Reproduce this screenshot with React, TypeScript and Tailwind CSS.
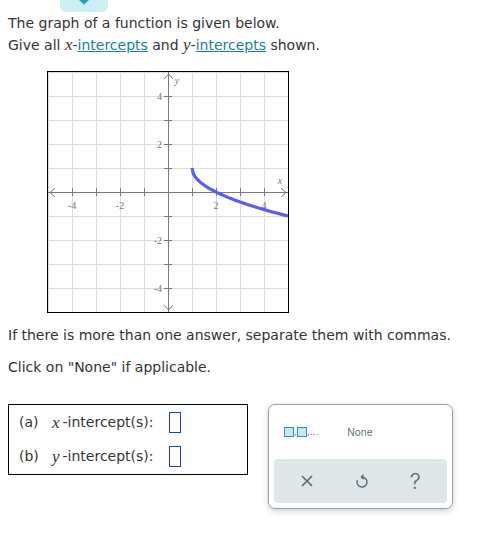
const U = 24;
const O = 120;

function curvePath() {
  const pts: string[] = [];
  for (let i = 0; i <= 80; i++) {
    const x = 1 + (4 * i) / 80;
    const y = 1 - Math.sqrt(x - 1);
    pts.push(`${(O + x * U).toFixed(2)},${(O - y * U).toFixed(2)}`);
  }
  return "M" + pts.join(" L");
}

function Graph() {
  const lines = [];
  for (let k = -5; k <= 5; k++) {
    const p = O + k * U;
    lines.push(<line key={"v" + k} x1={p} y1={0} x2={p} y2={240} stroke="#dcdcdc" strokeWidth={1} />);
    lines.push(<line key={"h" + k} x1={0} y1={p} x2={240} y2={p} stroke="#dcdcdc" strokeWidth={1} />);
  }
  const ticks = [];
  for (let k = -4; k <= 4; k++) {
    if (k === 0) continue;
    const p = O + k * U;
    ticks.push(<line key={"tx" + k} x1={p} y1={O - 4} x2={p} y2={O + 4} stroke="#7a7a7a" />);
    ticks.push(<line key={"ty" + k} x1={O - 4} y1={p} x2={O + 4} y2={p} stroke="#7a7a7a" />);
  }
  return (
    <svg width={240} height={240} className="block" shapeRendering="crispEdges">
      {lines}
      <line x1={0} y1={O + 0.5} x2={240} y2={O + 0.5} stroke="#7a7a7a" />
      <line x1={O + 0.5} y1={0} x2={O + 0.5} y2={240} stroke="#7a7a7a" />
      {ticks}
      <g fill="none" stroke="#7a7a7a" strokeWidth={1} shapeRendering="auto">
        <path d="M7,116 L2,120.5 L7,125" />
        <path d="M233,116 L238,120.5 L233,125" />
        <path d="M116,7 L120.5,2 L125,7" />
        <path d="M116,233 L120.5,238 L125,233" />
      </g>
      <g fill="#777" fontFamily="'Liberation Serif', serif" fontSize={10}>
        <text x={O - 4 * U} y={137} textAnchor="middle">-4</text>
        <text x={O - 2 * U} y={137} textAnchor="middle">-2</text>
        <text x={O + 2 * U} y={137} textAnchor="middle">2</text>
        <text x={O + 4 * U} y={137} textAnchor="middle">4</text>
        <text x={O - 6} y={O - 4 * U + 3.5} textAnchor="end">4</text>
        <text x={O - 6} y={O - 2 * U + 3.5} textAnchor="end">2</text>
        <text x={O - 6} y={O + 2 * U + 3.5} textAnchor="end">-2</text>
        <text x={O - 6} y={O + 4 * U + 3.5} textAnchor="end">-4</text>
        <text x={232} y={112} fontStyle="italic" textAnchor="middle">x</text>
        <text x={129} y={12} fontStyle="italic" textAnchor="middle">y</text>
      </g>
      <path d={curvePath()} fill="none" stroke="#5a5cf2" strokeWidth={3.2} shapeRendering="auto" />
    </svg>
  );
}

function Mx({ c }: { c: string }) {
  return <span className="font-['Liberation_Serif',serif] italic text-[17px]">{c}</span>;
}

export default function App() {
  return (
    <div className="w-[488px] h-[534px] bg-white text-[#333] font-['DejaVu_Sans',Verdana,sans-serif] text-[14px] leading-[21px]">
      <div className="ml-[60px] w-[48px] h-[12px] rounded-b-[7px] bg-[#cdeef5] flex justify-center">
        <svg width={12} height={5} viewBox="0 0 12 5">
          <path d="M1,0 L6,4.5 L11,0 Z" fill="#1fa3bf" />
        </svg>
      </div>
      <div className="pl-[8px] pt-[1px]">
        <p>The graph of a function is given below.</p>
        <p>
          Give all <Mx c="x" />-<span className="text-[#1b7f96] underline">intercepts</span> and <Mx c="y" />-
          <span className="text-[#1b7f96] underline">intercepts</span> shown.
        </p>
      </div>
      <div className="ml-[47px] mt-[15px] w-fit border border-black">
        <Graph />
      </div>
      <p className="pl-[8px] mt-[12px]">If there is more than one answer, separate them with commas.</p>
      <p className="pl-[8px] mt-[11px]">Click on "None" if applicable.</p>
      <div className="flex items-start mt-[26px] pl-[8px]">
        <div className="w-[240px] h-[71px] border border-black flex flex-col justify-center gap-[13px] pl-[10px]">
          <div className="flex items-center h-[21px]">
            <span className="w-[33px]">(a)</span>
            <Mx c="x" />
            <span className="ml-[3px]">-intercept(s):</span>
            <span className="ml-[15px] w-[12px] h-[21px] border border-[#1a3cf0]" />
          </div>
          <div className="flex items-center h-[21px]">
            <span className="w-[33px]">(b)</span>
            <Mx c="y" />
            <span className="ml-[3px]">-intercept(s):</span>
            <span className="ml-[15px] w-[12px] h-[21px] border border-[#1a3cf0]" />
          </div>
        </div>
        <div className="ml-[20px] w-[185px] h-[105px] rounded-[7px] border border-[#8ea3ab] shadow-[0_2px_6px_rgba(0,0,0,0.2)] p-[5px] flex flex-col">
          <div className="flex-1 flex items-center pl-[10px] pb-[5px]">
            <div className="flex items-end text-[#3a7d8e] text-[9px] leading-none">
              <span className="w-[10px] h-[10px] border-[1.5px] border-[#2a97ab] bg-[#c6e9f1]" />
              <span>,</span>
              <span className="w-[10px] h-[10px] border-[1.5px] border-[#2a97ab] bg-[#c6e9f1]" />
              <span>,...</span>
            </div>
            <span className="ml-[29px] text-[10px] text-[#5a7380] font-['Inter',sans-serif]">None</span>
          </div>
          <div className="h-[44px] rounded-[4px] bg-[#dfe6e8] flex items-center justify-around px-[6px]">
            <svg width={14} height={14} viewBox="0 0 14 14">
              <path d="M2,2 L12,12 M12,2 L2,12" stroke="#4f6d7a" strokeWidth={1.6} />
            </svg>
            <svg width={14} height={16} viewBox="0 0 14 16">
              <path d="M7,4 A5,5 0 1 1 2.3,7.3" fill="none" stroke="#4f6d7a" strokeWidth={1.4} />
              <path d="M8.6,1.8 L6.4,4 L8.6,6.2" fill="none" stroke="#4f6d7a" strokeWidth={1.4} />
            </svg>
            <span className="text-[22px] leading-none text-[#4f6d7a] font-['Inter',sans-serif] font-light">?</span>
          </div>
        </div>
      </div>
    </div>
  );
}
